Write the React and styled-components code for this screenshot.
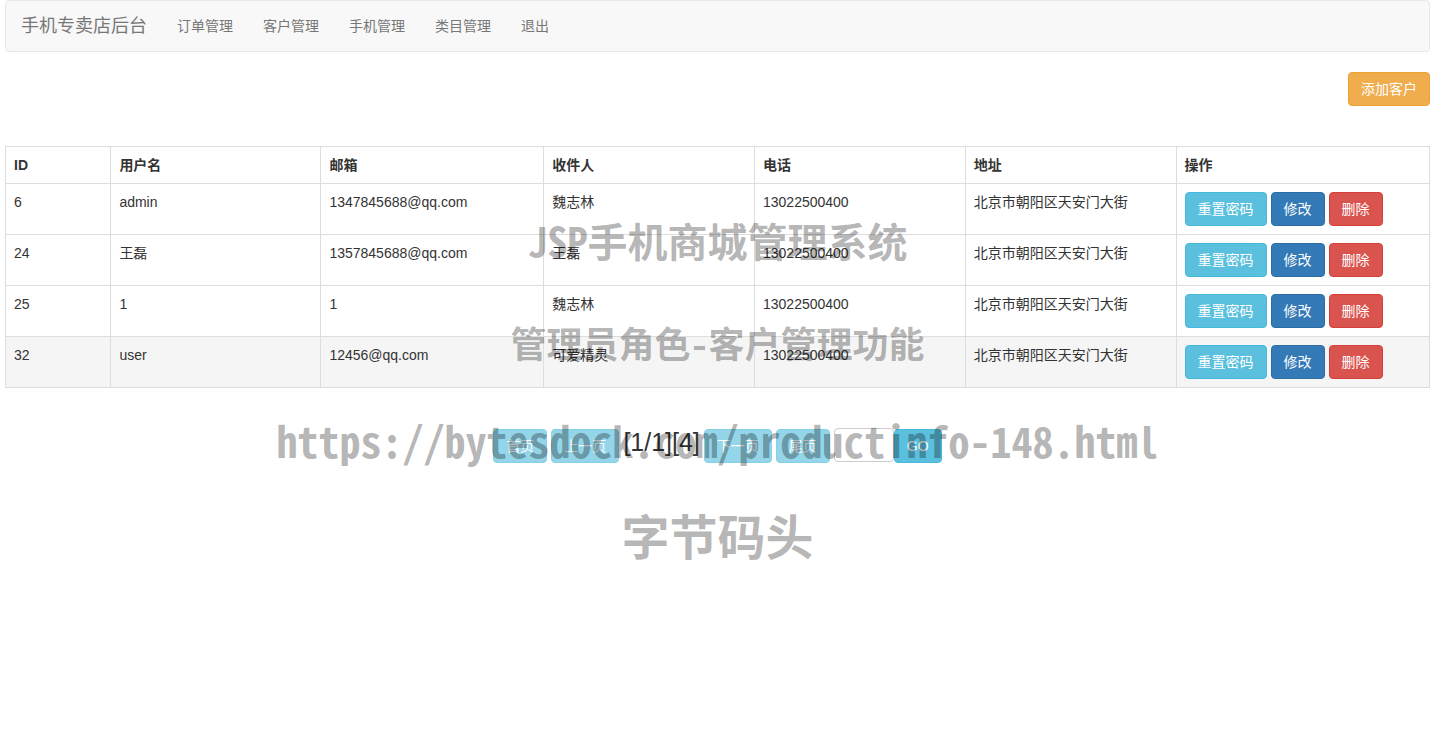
import React from "react";
import styled, { createGlobalStyle } from "styled-components";

const GlobalStyle = createGlobalStyle`
  *, *::before, *::after { box-sizing: border-box; }
  body {
    margin: 0;
    background: #fff;
    color: #333;
    font-family: "Liberation Sans", "Noto Sans CJK SC", sans-serif;
    font-size: 14px;
    line-height: 20px;
  }
`;

const Page = styled.div`
  position: relative;
  min-height: 100vh;
  padding: 0 5px;
`;

const Navbar = styled.nav`
  display: flex;
  min-height: 52px;
  background: #f8f8f8;
  border: 1px solid #e7e7e7;
  border-radius: 4px;
`;

const Brand = styled.a`
  padding: 15px;
  color: #777;
  font-size: 18px;
  text-decoration: none;
`;

const NavList = styled.ul`
  display: flex;
  margin: 0;
  padding: 0;
  list-style: none;
`;

const NavLink = styled.a`
  display: block;
  padding: 15px;
  color: #777;
  text-decoration: none;
`;

const Toolbar = styled.div`
  display: flex;
  justify-content: flex-end;
  padding: 20px 0 40px;
`;

const tones = {
  warning: ["#f0ad4e", "#eea236"],
  info: ["#5bc0de", "#46b8da"],
  primary: ["#337ab7", "#2e6da4"],
  danger: ["#d9534f", "#d43f3a"],
};

const Button = styled.button`
  padding: 6px 12px;
  border: 1px solid ${(p) => tones[p.$tone][1]};
  border-radius: 4px;
  background: ${(p) => tones[p.$tone][0]};
  color: #fff;
  font-family: inherit;
  font-size: 14px;
  line-height: 20px;
  white-space: nowrap;
  cursor: pointer;

  &:disabled {
    opacity: 0.65;
    cursor: not-allowed;
  }
`;

const Table = styled.table`
  width: 100%;
  table-layout: fixed;
  border-collapse: collapse;
  border: 1px solid #ddd;
`;

const Col = styled.col`
  width: ${(p) => p.$width};
`;

const HeadCell = styled.th`
  padding: 8px;
  border: 1px solid #ddd;
  text-align: left;
  font-weight: bold;
`;

const Row = styled.tr`
  background: ${(p) => (p.$active ? "#f5f5f5" : "transparent")};
`;

const Cell = styled.td`
  padding: 8px;
  border: 1px solid #ddd;
  vertical-align: top;
`;

const Actions = styled.div`
  display: flex;
  gap: 4px;
`;

const Pager = styled.form`
  display: flex;
  justify-content: center;
  gap: 4px;
  margin-top: 41px;
`;

const PageInfo = styled.span`
  font-size: 25px;
  line-height: 26px;
`;

const JumpGroup = styled.div`
  display: flex;
`;

const PageInput = styled.input`
  width: 60px;
  height: 34px;
  margin-top: -1px;
  padding: 6px 12px;
  border: 1px solid #ccc;
  border-radius: 4px;
  background: #fff;
  font: inherit;
`;

const Watermark = styled.div`
  position: absolute;
  top: 216px;
  left: 0;
  right: 0;
  display: flex;
  flex-direction: column;
  align-items: center;
  color: rgba(0, 0, 0, 0.3);
  font-family: "Noto Sans Mono CJK SC", "Noto Sans CJK SC", sans-serif;
  font-weight: bold;
  pointer-events: none;
`;

const MarkLine = styled.div`
  margin-top: ${(p) => p.$gap || 0}px;
  font-size: ${(p) => p.$size}px;
  line-height: 48px;
  white-space: nowrap;
`;

const links = ["订单管理", "客户管理", "手机管理", "类目管理", "退出"];

const columns = [
  ["ID", "7.4%"],
  ["用户名", "14.75%"],
  ["邮箱", "15.65%"],
  ["收件人", "14.8%"],
  ["电话", "14.8%"],
  ["地址", "14.8%"],
  ["操作", "auto"],
];

const customers = [
  ["6", "admin", "1347845688@qq.com", "魏志林", "13022500400", "北京市朝阳区天安门大街"],
  ["24", "王磊", "1357845688@qq.com", "王磊", "13022500400", "北京市朝阳区天安门大街"],
  ["25", "1", "1", "魏志林", "13022500400", "北京市朝阳区天安门大街"],
  ["32", "user", "12456@qq.com", "可爱精灵", "13022500400", "北京市朝阳区天安门大街"],
];

export default function App() {
  return (
    <Page>
      <GlobalStyle />
      <Navbar>
        <Brand href="#">手机专卖店后台</Brand>
        <NavList>
          {links.map((label) => (
            <li key={label}>
              <NavLink href="#">{label}</NavLink>
            </li>
          ))}
        </NavList>
      </Navbar>

      <Toolbar>
        <Button type="button" $tone="warning">添加客户</Button>
      </Toolbar>

      <Table>
        <colgroup>
          {columns.map(([label, width]) => (
            <Col key={label} $width={width} />
          ))}
        </colgroup>
        <thead>
          <tr>
            {columns.map(([label]) => (
              <HeadCell key={label} scope="col">{label}</HeadCell>
            ))}
          </tr>
        </thead>
        <tbody>
          {customers.map((customer) => (
            <Row key={customer[0]} $active={customer[0] === "32"}>
              {customer.map((value, i) => (
                <Cell key={i}>{value}</Cell>
              ))}
              <Cell>
                <Actions>
                  <Button type="button" $tone="info">重置密码</Button>
                  <Button type="button" $tone="primary">修改</Button>
                  <Button type="button" $tone="danger">删除</Button>
                </Actions>
              </Cell>
            </Row>
          ))}
        </tbody>
      </Table>

      <Pager onSubmit={(e) => e.preventDefault()}>
        <Button type="button" $tone="info" disabled>首页</Button>
        <Button type="button" $tone="info" disabled>上一页</Button>
        <PageInfo>[1/1][4]</PageInfo>
        <Button type="button" $tone="info" disabled>下一页</Button>
        <Button type="button" $tone="info" disabled>尾页</Button>
        <JumpGroup>
          <PageInput type="text" aria-label="页码" />
          <Button type="submit" $tone="info">GO</Button>
        </JumpGroup>
      </Pager>

      <Watermark>
        <MarkLine $size={40}>JSP手机商城管理系统</MarkLine>
        <MarkLine $size={36} $gap={54}>管理员角色-客户管理功能</MarkLine>
        <MarkLine $size={42} $gap={50}>
          https://bytesdock.com/productinfo-148.html
        </MarkLine>
        <MarkLine $size={48} $gap={46}>字节码头</MarkLine>
      </Watermark>
    </Page>
  );
}
